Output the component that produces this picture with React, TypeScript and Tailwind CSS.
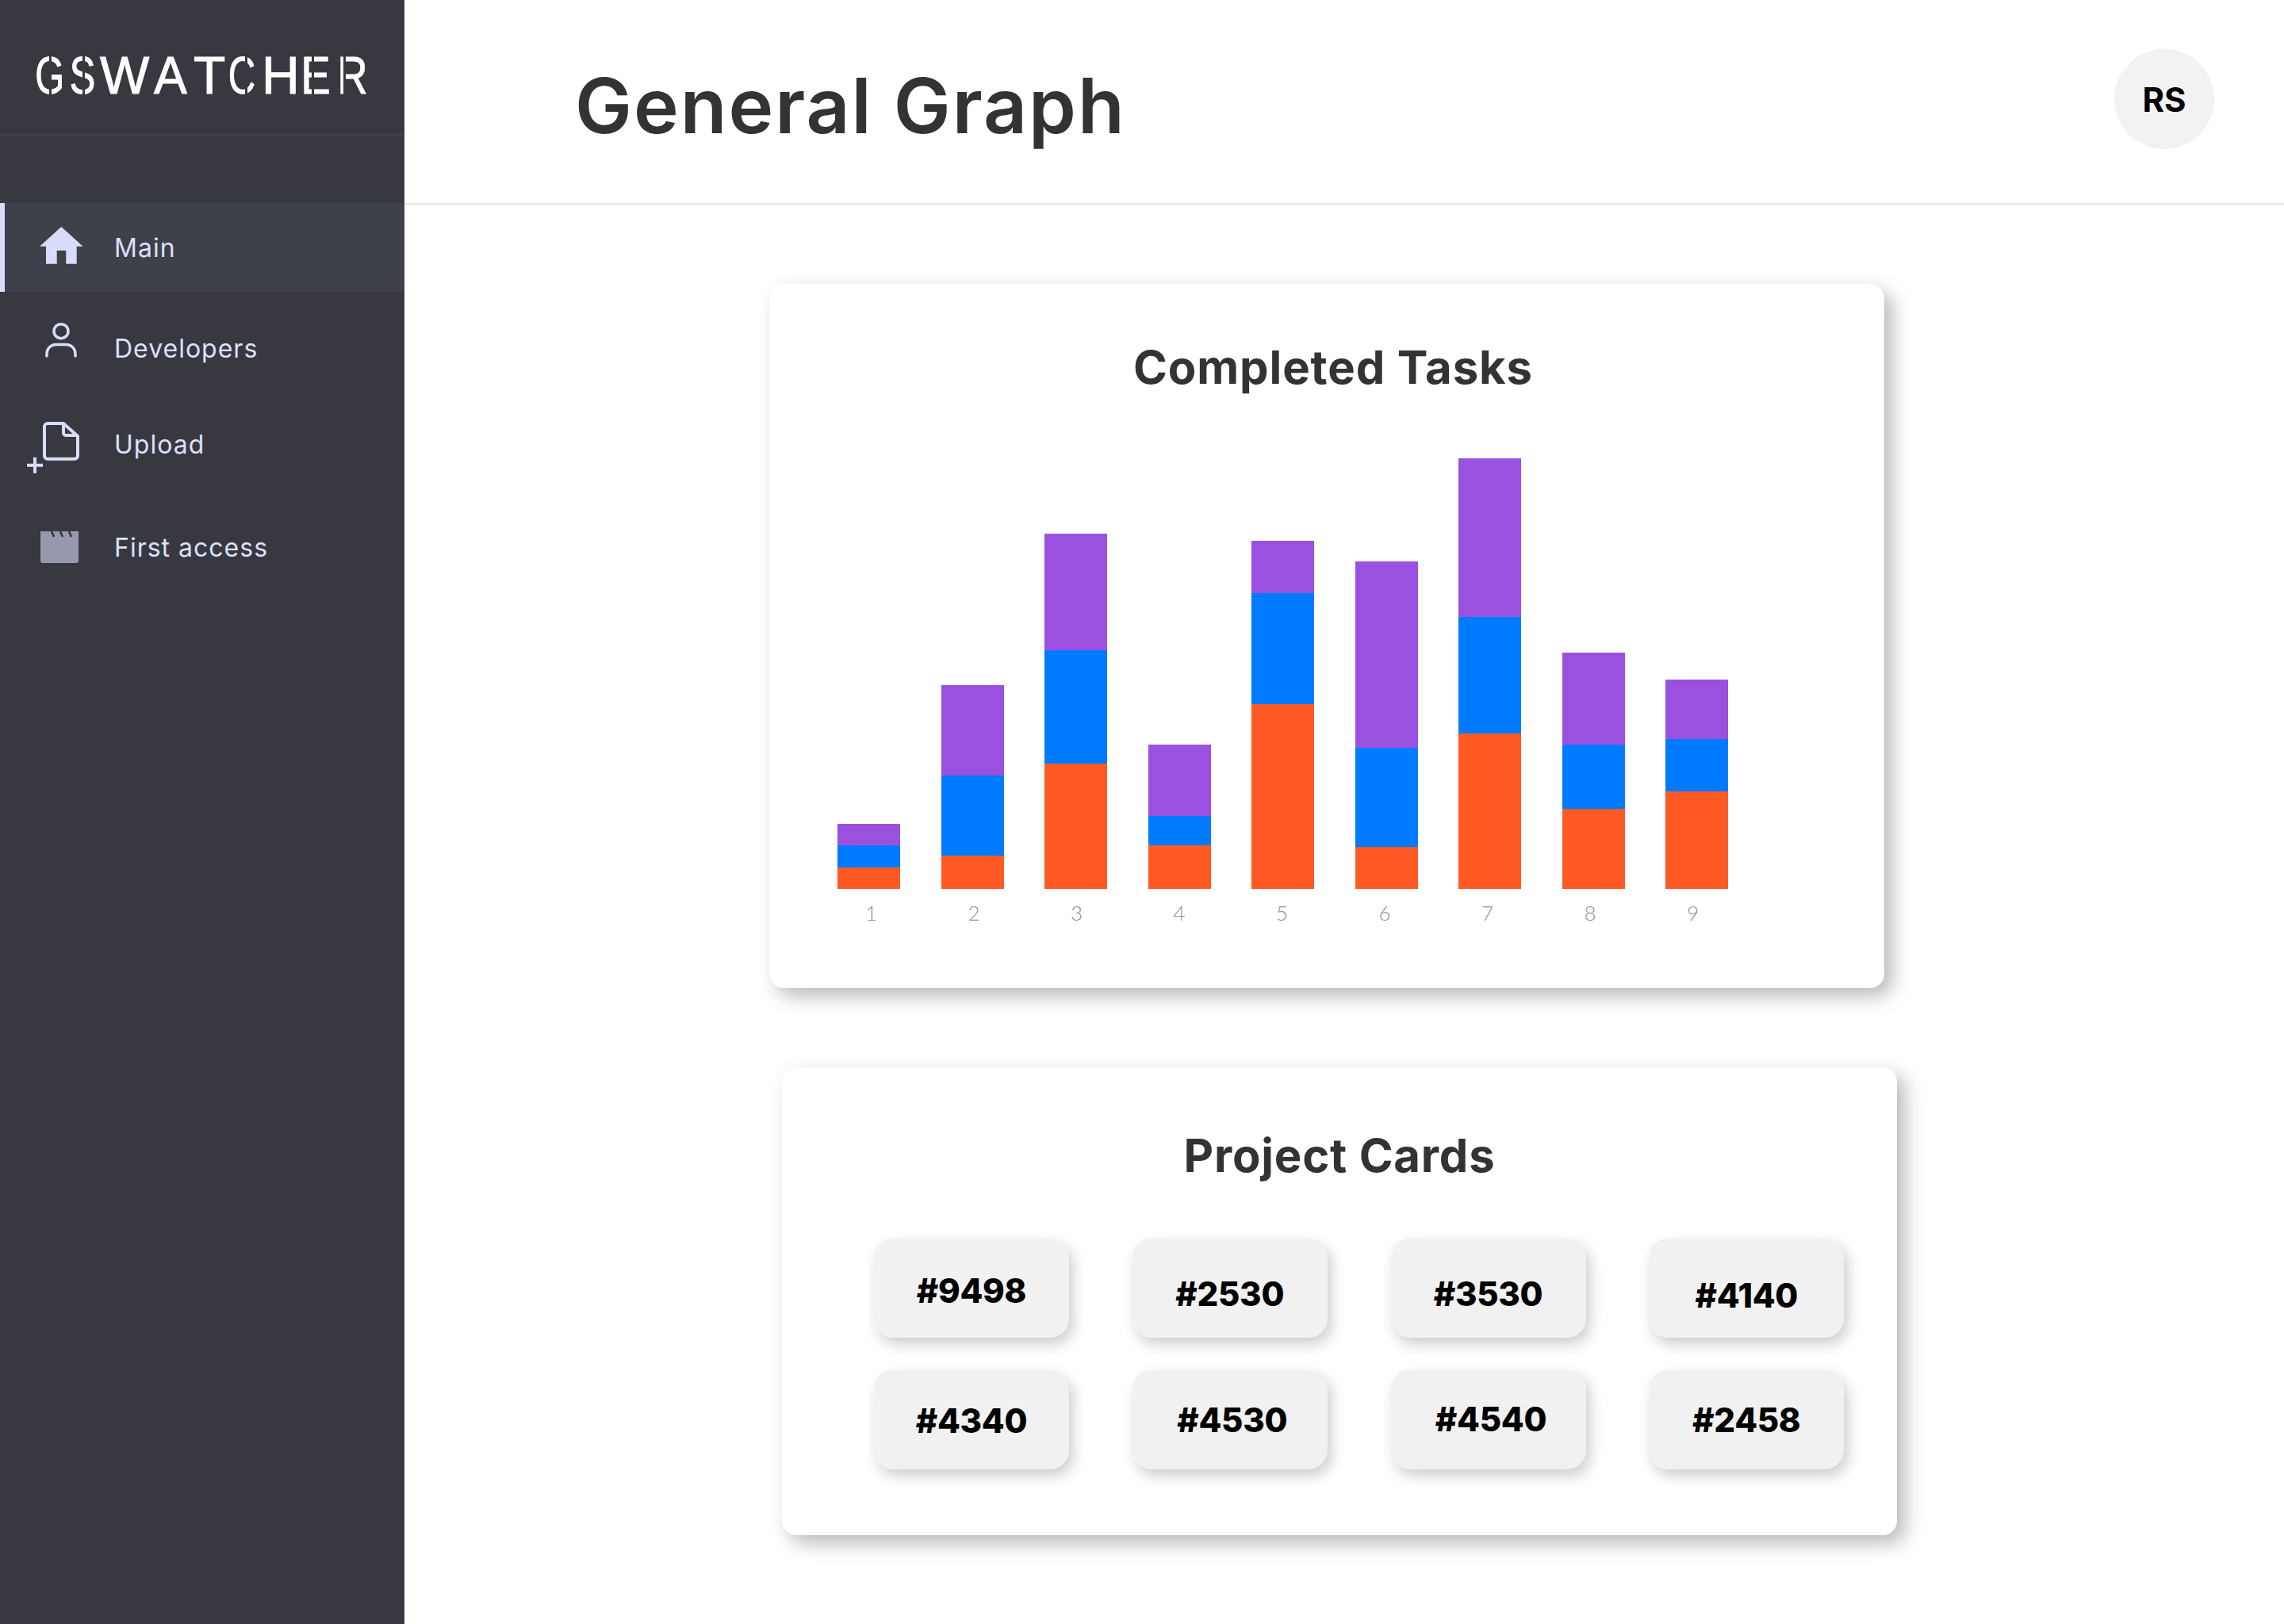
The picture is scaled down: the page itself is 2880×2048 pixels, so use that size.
import React from "react";

const FONT = "font-['Inter',sans-serif]";

/* ---------------- Data ---------------- */

// heights in px: orange, blue, purple
const bars = [
  { id: 1, orange: 27, blue: 28, purple: 27 },
  { id: 2, orange: 42, blue: 101, purple: 114 },
  { id: 3, orange: 158, blue: 143, purple: 147 },
  { id: 4, orange: 55, blue: 37, purple: 90 },
  { id: 5, orange: 233, blue: 140, purple: 66 },
  { id: 6, orange: 53, blue: 125, purple: 235 },
  { id: 7, orange: 196, blue: 147, purple: 200 },
  { id: 8, orange: 101, blue: 81, purple: 116 },
  { id: 9, orange: 123, blue: 66, purple: 75 },
];

const cards = [
  { label: "#9498", cls: "pt-[5px]" },
  { label: "#2530", cls: "pt-[13px]" },
  { label: "#3530", cls: "pt-[13px]" },
  { label: "#4140", cls: "pt-[18px]" },
  { label: "#4340", cls: "pt-[2px]" },
  { label: "#4530", cls: "pl-[6px]" },
  { label: "#4540", cls: "pl-[7px] pb-[2px]" },
  { label: "#2458", cls: "" },
];

const logo = [
  { ch: "G", w: 44, cls: "scale-x-[0.72]" },
  { ch: "S", w: 44, cls: "scale-x-[0.74]" },
  { ch: "W", w: 60, cls: "scale-x-100" },
  { ch: "A", w: 58, cls: "scale-x-[0.95]" },
  { ch: "T", w: 36, cls: "scale-x-100" },
  { ch: "C", w: 50, cls: "scale-x-[0.72]" },
  { ch: "H", w: 44, cls: "scale-x-100" },
  { ch: "E", w: 48, cls: "scale-x-[0.85]" },
  { ch: "R", w: 36, cls: "scale-x-[0.8]" },
];

// stencil cuts through the logo, px from its left edge
const slits = [24, 66, 271, 355, 395];

/* ---------------- Icons ---------------- */

const HomeIcon = () => (
  <svg width="100" height="100" viewBox="0 0 100 100" fill="#d9dcf8">
    <path d="M47.3 24 L74.7 48.7 H66.7 V70.7 H53.3 V54 H41.7 V70.7 H28 V48.7 H20 Z" />
  </svg>
);

const PersonIcon = () => (
  <svg width="100" height="100" viewBox="0 0 100 100" fill="none" stroke="#d9dcf8" strokeWidth="3.5" strokeLinecap="round">
    <circle cx="47" cy="28.7" r="9" />
    <path d="M29 60 v-3 a11.5 11.5 0 0 1 11.5 -11.5 h13 a11.5 11.5 0 0 1 11.5 11.5 v3" />
  </svg>
);

const FileIcon = () => (
  <svg width="100" height="100" viewBox="0 0 100 100" fill="none" stroke="#d9dcf8" strokeWidth="4">
    <path d="M30 24 H50 L68 40 V64.7 a4 4 0 0 1 -4 4 H30 a4 4 0 0 1 -4 -4 V28 a4 4 0 0 1 4 -4 Z" strokeLinejoin="round" />
    <path d="M50 24 V36 a3 3 0 0 0 3 3 H68" />
    <path d="M4 76.7 H24 M14 66.7 V86.7" />
  </svg>
);

const ClapperIcon = () => (
  <svg width="100" height="100" viewBox="0 0 100 100">
    <path d="M21 30 H69 V67 a3 3 0 0 1 -3 3 H24 a3 3 0 0 1 -3 -3 Z" fill="#9699ae" />
    <path d="M35 30 L38 37 M46 30 L49 37 M57 30 L60 37" stroke="#383841" strokeWidth="2.5" />
  </svg>
);

const NavItem = ({
  icon,
  label,
  active,
  className,
}: {
  icon: React.ReactNode;
  label: string;
  active?: boolean;
  className?: string;
}) => (
  <div
    className={`flex items-center ${
      active ? "h-[112px] border-l-[6px] border-[#d9dcf8] bg-[#3e404a] pl-[24px]" : "h-[100px] pl-[30px]"
    } ${className ?? ""}`}
  >
    <div className="h-[100px] w-[114px] shrink-0">{icon}</div>
    <span className="pt-[2px] text-[32px] tracking-[1px] text-[#dde0fa]">{label}</span>
  </div>
);

/* ---------------- Page ---------------- */

export default function App() {
  return (
    <div className={`flex h-[2048px] w-[2880px] bg-white ${FONT}`}>
      {/* Sidebar */}
      <aside className="w-[510px] shrink-0 bg-[#383841]">
        <div className="flex h-[171px] items-center border-b-2 border-[#41424d] pl-[38px] pt-[20px]">
          <div className="relative flex font-['Liberation_Sans',sans-serif] text-[66px] leading-none text-white [-webkit-text-stroke:1px_white]">
            {logo.map((l, i) => (
              <span key={i} className={`inline-block text-center ${l.cls}`} style={{ width: l.w }}>
                {l.ch}
              </span>
            ))}
            {slits.map((x) => (
              <span key={x} className="absolute inset-y-0 w-[3px] bg-[#383841]" style={{ left: x }} />
            ))}
          </div>
        </div>
        <nav className="mt-[85px]">
          <NavItem active icon={<HomeIcon />} label="Main" />
          <NavItem className="mt-[21px]" icon={<PersonIcon />} label="Developers" />
          <NavItem className="mt-[21px]" icon={<FileIcon />} label="Upload" />
          <NavItem className="mt-[30px]" icon={<ClapperIcon />} label="First access" />
        </nav>
      </aside>

      {/* Main */}
      <main className="flex-1">
        <header className="flex h-[258px] items-center justify-between border-b-2 border-[#e5e5e5] pl-[215px] pr-[88px]">
          <h1 className="pt-[10px] text-[96px] font-semibold leading-none tracking-[2px] text-[#333333]">General Graph</h1>
          <div className="mb-[6px] flex h-[126px] w-[126px] items-center justify-center rounded-full bg-[#f2f2f2] text-[42px] font-bold text-black">
            RS
          </div>
        </header>

        {/* Completed Tasks */}
        <section className="ml-[460px] mt-[100px] h-[888px] w-[1406px] rounded-[18px] bg-white shadow-[10px_10px_24px_rgba(0,0,0,0.28)]">
          <h2 className="pt-[72px] pl-[16px] text-center text-[58px] font-bold leading-[66px] tracking-[0.9px] text-[#333333]">
            Completed Tasks
          </h2>
          <div className="ml-[86px] mt-[5px] flex h-[620px] items-end gap-[51.5px]">
            {bars.map((b) => (
              <div key={b.id} className="flex w-[79px] flex-col">
                <div className="bg-[#9b51e0]" style={{ height: b.purple }} />
                <div className="bg-[#007bff]" style={{ height: b.blue }} />
                <div className="bg-[#ff5a24]" style={{ height: b.orange }} />
              </div>
            ))}
          </div>
          <div className="ml-[89px] mt-[15px] flex gap-[50.5px]">
            {bars.map((b) => (
              <div key={b.id} className="w-[79px] text-center font-['Lato',sans-serif] text-[26px] font-light leading-[30px] text-[#8f8f8f]">
                {b.id}
              </div>
            ))}
          </div>
        </section>

        {/* Project Cards */}
        <section className="ml-[476px] mt-[100px] h-[590px] w-[1406px] rounded-[18px] bg-white shadow-[10px_10px_24px_rgba(0,0,0,0.28)]">
          <h2 className="pt-[78px] text-center text-[58px] font-bold leading-[66px] tracking-[0.8px] text-[#333333]">Project Cards</h2>
          <div className="ml-[116px] mt-[72px] grid w-[1223px] grid-cols-4 gap-x-[80px] gap-y-[41px]">
            {cards.map((c) => (
              <div
                key={c.label}
                className={`flex h-[125px] w-[246px] items-center justify-center rounded-[24px] bg-[#f1f1f1] text-[42px] font-extrabold tracking-[-0.3px] text-black shadow-[5px_8px_18px_rgba(0,0,0,0.2)] ${c.cls}`}
              >
                {c.label}
              </div>
            ))}
          </div>
        </section>
      </main>
    </div>
  );
}
